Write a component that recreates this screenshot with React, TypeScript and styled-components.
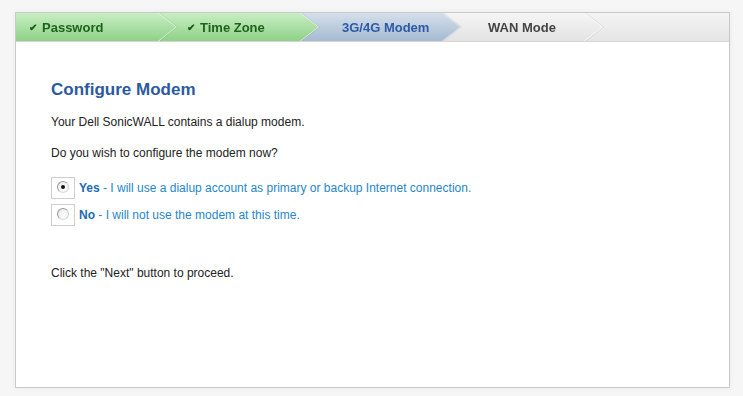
import React, { useState } from 'react'
import styled, { createGlobalStyle, css } from 'styled-components'

const GlobalStyle = createGlobalStyle`
  html, body {
    margin: 0;
    padding: 0;
    background: #f6f6f6;
    font-family: Arial, 'Liberation Sans', sans-serif;
  }
`

type StepState = 'done' | 'current' | 'todo'

const Page = styled.div`
  width: 743px;
  height: 396px;
  box-sizing: border-box;
  padding: 12px 13px 8px 15px;
  background: #f6f6f6;
`

const Panel = styled.div`
  height: 100%;
  box-sizing: border-box;
  background: #fff;
  border: 1px solid #c9c9c9;
  box-shadow: 0 0 6px rgba(0, 0, 0, 0.05);
  display: flex;
  flex-direction: column;
`

const StepBar = styled.div`
  display: flex;
  height: 28px;
  background: linear-gradient(#f4f4f4, #e5e5e5);
  border-bottom: 1px solid #d6d6d6;
`

const stepColours = {
  done: css`
    background: linear-gradient(#c8eec3, #8fd187);
    color: #1d641d;
  `,
  current: css`
    background: linear-gradient(#d4dfea, #a6bad2);
    color: #2d5aa5;
  `,
  todo: css`
    background: linear-gradient(#f5f5f5, #e3e3e3);
    color: #444;
  `
}

const edgeColours = {
  done: '#e6f8e2',
  current: '#e3eaf2',
  todo: '#ffffff'
}

const Step = styled.div<{ $state: StepState; $order: number }>`
  position: relative;
  z-index: ${({ $order }) => 10 - $order};
  width: 160px;
  margin-right: -18px;
  flex-shrink: 0;
  filter: drop-shadow(1px 0 0 ${({ $state }) => edgeColours[$state]})
    drop-shadow(1px 0 0 rgba(0, 0, 0, 0.1));
`

const StepShape = styled.div<{ $state: StepState; $indent: number }>`
  height: 100%;
  display: flex;
  align-items: center;
  box-sizing: border-box;
  padding-left: ${({ $indent }) => $indent}px;
  clip-path: polygon(0 0, calc(100% - 18px) 0, 100% 50%, calc(100% - 18px) 100%, 0 100%);
  font-size: 13px;
  font-weight: bold;
  white-space: nowrap;
  ${({ $state }) => stepColours[$state]}
`

const Tick = styled.span`
  font-size: 10px;
  margin-right: 5px;
  color: #145c14;
`

const Content = styled.div`
  padding: 38px 35px 0;
  display: flex;
  flex-direction: column;
`

const Title = styled.h2`
  margin: 0 0 15px;
  font-size: 17px;
  line-height: 20px;
  font-weight: bold;
  color: #2c5aa0;
`

const Text = styled.p<{ $gap?: number }>`
  margin: 0 0 ${({ $gap }) => $gap ?? 0}px;
  font-size: 12px;
  line-height: 14px;
  color: #222;
`

const OptionList = styled.div`
  display: flex;
  flex-direction: column;
  gap: 5px;
  margin-bottom: 40px;
`

const Option = styled.label`
  display: flex;
  align-items: center;
  gap: 4px;
  cursor: pointer;
  font-size: 12px;
  color: #1f87c9;
`

const RadioBox = styled.span`
  width: 24px;
  height: 22px;
  box-sizing: border-box;
  border: 1px solid #cfcfcf;
  background: #fff;
  display: flex;
  align-items: center;
  justify-content: center;
`

const Radio = styled.span<{ $checked: boolean }>`
  width: 12px;
  height: 12px;
  box-sizing: border-box;
  border-radius: 50%;
  border: 1px solid #9a9a9a;
  border-bottom-color: #dadada;
  border-right-color: #d0d0d0;
  background: radial-gradient(circle at 60% 65%, #ffffff, #e6e6e6);
  display: flex;
  align-items: center;
  justify-content: center;
  margin-top: -2px;

  &::after {
    content: '';
    width: 4px;
    height: 4px;
    border-radius: 50%;
    background: #111;
    display: ${({ $checked }) => ($checked ? 'block' : 'none')};
  }
`

const Strong = styled.b`
  color: #1a6cb2;
`

const steps: { label: string; state: StepState; indent: number }[] = [
  { label: 'Password', state: 'done', indent: 13 },
  { label: 'Time Zone', state: 'done', indent: 29 },
  { label: '3G/4G Modem', state: 'current', indent: 42 },
  { label: 'WAN Mode', state: 'todo', indent: 46 }
]

export default function App() {
  const [useModem, setUseModem] = useState(true)

  return (
    <Page>
      <GlobalStyle />
      <Panel>
        <StepBar>
          {steps.map((s, i) => (
            <Step key={s.label} $state={s.state} $order={i}>
              <StepShape $state={s.state} $indent={s.indent}>
                {s.state === 'done' && <Tick>✔</Tick>}
                {s.label}
              </StepShape>
            </Step>
          ))}
        </StepBar>
        <Content>
          <Title>Configure Modem</Title>
          <Text $gap={17}>Your Dell SonicWALL contains a dialup modem.</Text>
          <Text $gap={17}>Do you wish to configure the modem now?</Text>
          <OptionList>
            <Option onClick={() => setUseModem(true)}>
              <RadioBox>
                <Radio $checked={useModem} />
              </RadioBox>
              <span>
                <Strong>Yes</Strong> - I will use a dialup account as primary or backup Internet connection.
              </span>
            </Option>
            <Option onClick={() => setUseModem(false)}>
              <RadioBox>
                <Radio $checked={!useModem} />
              </RadioBox>
              <span>
                <Strong>No</Strong> - I will not use the modem at this time.
              </span>
            </Option>
          </OptionList>
          <Text>Click the "Next" button to proceed.</Text>
        </Content>
      </Panel>
    </Page>
  )
}
